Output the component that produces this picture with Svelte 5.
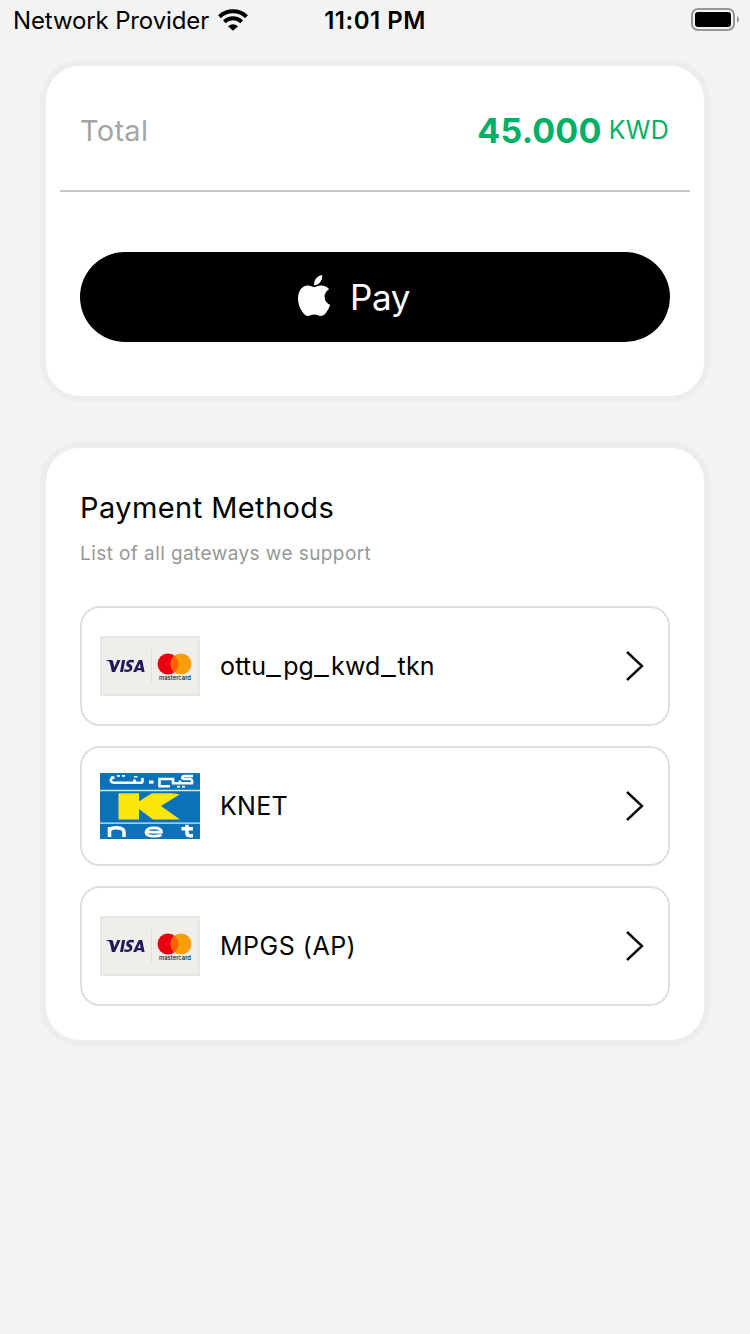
<script>
  const methods = [
    { name: 'ottu_pg_kwd_tkn', logo: 'cards', spacing: 0.15 },
    { name: 'KNET', logo: 'knet', spacing: 0.3 },
    { name: 'MPGS (AP)', logo: 'cards', spacing: 0.5 }
  ];
  const parts = (name) => name.split(/(_)/);
</script>

{#snippet cards()}
  <svg class="cards" width="100" height="60" viewBox="0 0 100 60">
    <rect width="100" height="60" fill="#e5e4df" />
    <rect x="1" y="1" width="98" height="58" fill="#eae9e5" />
    <rect x="2.5" y="2.5" width="95" height="55" fill="#efeeea" />
    <path d="M51.5 14v33" stroke="#e0dfdb" />
    <g fill="#211b58">
      <path d="M6 24h5.4q1.3 0 1.6 1.2l1.3 6.1 3.1-7.3h3.1L15 36h-3.1L9.800 26.6Q9.500 25.300 6 24.300z" />
      <path d="M22.2 24h3l-2.200 12H20z" />
      <path d="M34.100 24.300l-.5 2.400c-2-.8-4.300-.8-4.500.4-.2 1.200 3.600 1.500 3.300 4.800-.4 3.800-4.800 4.800-8.300 3.600l.5-2.500c2.100 1 4.800.8 5-.6.200-1.300-3.600-1.500-3.400-4.700.3-3.700 4.400-4.800 7.900-3.400z" />
      <path fill-rule="evenodd" d="M39.300 24h2.900L44.600 36h-2.900l-.4-1.800h-4.200l-.8 1.800h-3.200l5.100-11q.4-1 1.100-1zm.5 3.500-1.900 4.400h2.800z" />
    </g>
    <circle cx="68" cy="28" r="10.5" fill="#eb0010" />
    <circle cx="81" cy="28" r="10.5" fill="#f79e08" />
    <path d="M74.5 19.8a10.5 10.5 0 0 1 0 16.4a10.5 10.5 0 0 1 0-16.400z" fill="#ff5f00" />
    <text x="59" y="43.500" textLength="32" lengthAdjust="spacingAndGlyphs" class="mc">mastercard</text>
  </svg>
{/snippet}

{#snippet knet()}
  <svg class="knet" width="100" height="66" viewBox="0 0 100 66">
    <rect width="100" height="66" fill="#0b72b9" />
    <path d="M0 17.5h100M0 50.2h100" stroke="#d8e8f0" stroke-width="1.3" />
    <path d="M18.5 20.3H39v8l13-8h19l9 1L61 33l19 13.400H53L39 36v10.400H18.500z" fill="#fbe70b" />
    <g fill="none" stroke="#fff" stroke-width="2.600">
      <path d="M14.500 4.500H12q-3 5.200 2 5.200h27q1.500 0 1.500-1.500V5M34.500 10V6.500" />
      <path d="M93 3H83.500q-3 2.600 1 3h5.500q3 .3 2 4.200H80V7.500M80 10.200h-7V6H59.500v7.200H70" />
    </g>
    <g fill="#fff">
      <rect x="49" y="7.500" width="4.500" height="3.200" />
      <rect x="17" y="2" width="3" height="1.800" /><rect x="22" y="2" width="3" height="1.800" />
      <rect x="34" y="3" width="3.500" height="1.500" />
      <rect x="77" y="12.800" width="3" height="1.800" /><rect x="82" y="12.800" width="3" height="1.800" />
    </g>
    <g fill="none" stroke="#fff" stroke-width="3.600">
      <path d="M9.500 64V54M10 56.500q3-2.500 9-1.500 5 .5 5 4.500V64" />
      <path d="M46 59.200h15.500q0-4.400-7.500-4.400t-8 4.400q0 4 8 4 4.500 0 7.500-1.200" stroke-width="2.800" />
      <path d="M87 51.800v8.500q0 2.500 3.500 2.500H93M81.500 55.700H93" />
    </g>
  </svg>
{/snippet}

<div class="screen">
  <header class="status">
    <div class="carrier">
      <span class="provider">Network Provider</span>
      <svg width="30" height="22" viewBox="0 0 30 22">
        <g fill="none" stroke="#000" stroke-width="4">
          <path d="M1.500 7.700Q7 2.300 15 2.300t13.500 5.400" />
          <path d="M6.300 12.700Q10 9.300 15 9.300t8.700 3.400" stroke-width="3.900" />
        </g>
        <path d="M10 17.200q5-4 10 0l-5 4.600z" />
      </svg>
    </div>
    <span class="time">11:01 PM</span>
    <svg class="battery" width="48" height="24" viewBox="0 0 48 24">
      <rect x="1" y="1" width="42" height="21" rx="6" fill="none" stroke="#979797" stroke-width="2" />
      <rect x="4" y="4" width="36" height="15" rx="3" />
      <path d="M46 8q2 1.500 2 3.500T46 15z" fill="#979797" />
    </svg>
  </header>

  <main>
    <section class="card summary">
      <div class="total">
        <span class="label">Total</span>
        <span class="amount"><b>45.000</b><span class="currency">KWD</span></span>
      </div>
      <button class="pay">
        <svg width="34" height="42" viewBox="0 0 34 42" fill="#fff">
          <path d="M25.300 0q.4 4.400-2.300 7.500-2.500 2.900-6 2.600-.2-4.300 2.300-7Q21.500.6 25.300 0z" />
          <path d="M17 12.100c1.700 0 4.200-1.900 8-1.600q4.600.4 7.100 3.800-4.700 2.900-4.500 7.800.3 5.600 5.600 7.900-1.500 4.200-4 7.600c-1.600 2.200-3 3.300-5.200 3.300-2.300 0-3.600-1.400-6.700-1.400s-4.300 1.400-6.500 1.400c-2 0-3.700-1.600-5.500-4.200Q1 30.500 1 23.700c0-8.700 4.900-13.200 9.700-13.200 2.700 0 4.700 1.600 6.300 1.600z" />
        </svg>
        <span>Pay</span>
      </button>
    </section>

    <section class="card methods">
      <h1>Payment Methods</h1>
      <p>List of all gateways we support</p>
      <ul>
        {#each methods as method}
          <li>
            {#if method.logo === 'cards'}{@render cards()}{:else}{@render knet()}{/if}
            <span class="name" style="letter-spacing: {method.spacing}px">{#each parts(method.name) as part}<span class:underscore={part === '_'}>{part}</span>{/each}</span>
            <svg class="chevron" width="20" height="32" viewBox="0 0 20 32">
              <path d="M2 2l15 14L2 30" fill="none" stroke="#0a0a0a" stroke-width="2.400" />
            </svg>
          </li>
        {/each}
      </ul>
    </section>
  </main>
</div>

<style>
  :global(body) { margin: 0; background: #f3f3f3; }
  * { box-sizing: border-box; }
  .screen {
    height: 1334px;
    background: #f3f3f3;
    color: #000;
    font-family: Inter, "Liberation Sans", sans-serif;
  }
  .status {
    display: grid;
    grid-template-columns: 1fr auto 1fr;
    align-items: start;
    height: 60px;
    padding: 8px 11px 0 13px;
    line-height: 26px;
    font-size: 24px;
  }
  .carrier { display: flex; gap: 9px; }
  .carrier svg { margin-top: 1px; }
  .provider { letter-spacing: -0.13px; white-space: nowrap; }
  .time { font-weight: 600; letter-spacing: 0.5px; margin-right: 2px; }
  .battery { justify-self: end; }
  main { display: flex; flex-direction: column; gap: 40px; padding: 0 40px; }
  .card {
    border: 6px solid #ededed;
    border-radius: 40px;
    background: #fff;
  }
  .summary { height: 342px; padding: 0 14px; }
  .total {
    display: flex;
    align-items: center;
    justify-content: space-between;
    height: 126px;
    padding: 4px 21px 0 20px;
    border-bottom: 2px solid #c6c6c6;
  }
  .label { font-size: 29px; color: #a5a5a5; letter-spacing: 0.3px; }
  .amount { display: flex; align-items: center; gap: 7px; color: #00af66; }
  .amount b { font-size: 34px; font-weight: 700; letter-spacing: 0.2px; }
  .currency { font-size: 25px; letter-spacing: 0.3px; }
  .pay {
    display: flex;
    align-items: center;
    gap: 19px;
    width: 590px;
    height: 90px;
    margin: 60px 20px 0;
    padding: 0 0 0 217px;
    border: 0;
    border-radius: 45px;
    background: #000;
    color: #fff;
    font-family: inherit;
    font-size: 35px;
    letter-spacing: -0.4px;
  }
  .pay svg { margin-bottom: 3px; }
  .methods { height: 604px; padding: 40px 34px 0; }
  h1 { margin: 0; font-size: 29px; line-height: 40px; font-weight: 400; letter-spacing: 0.42px; }
  p { margin: 11px 0 0; font-size: 19px; line-height: 30px; color: #979797; letter-spacing: 0.42px; }
  ul { display: flex; flex-direction: column; gap: 20px; list-style: none; margin: 37px 0 0; padding: 0; }
  li {
    display: flex;
    align-items: center;
    gap: 20px;
    height: 120px;
    padding: 0 23px 0 18px;
    border: 2px solid #dfdfdf;
    border-radius: 20px;
  }
  .name { flex: 1; font-size: 25px; }
  .underscore {
    display: inline-block;
    width: 17px;
    transform: scaleX(1.3);
    transform-origin: left;
  }
  .mc { font: 500 5.5px Inter, sans-serif; fill: #111; }
</style>
